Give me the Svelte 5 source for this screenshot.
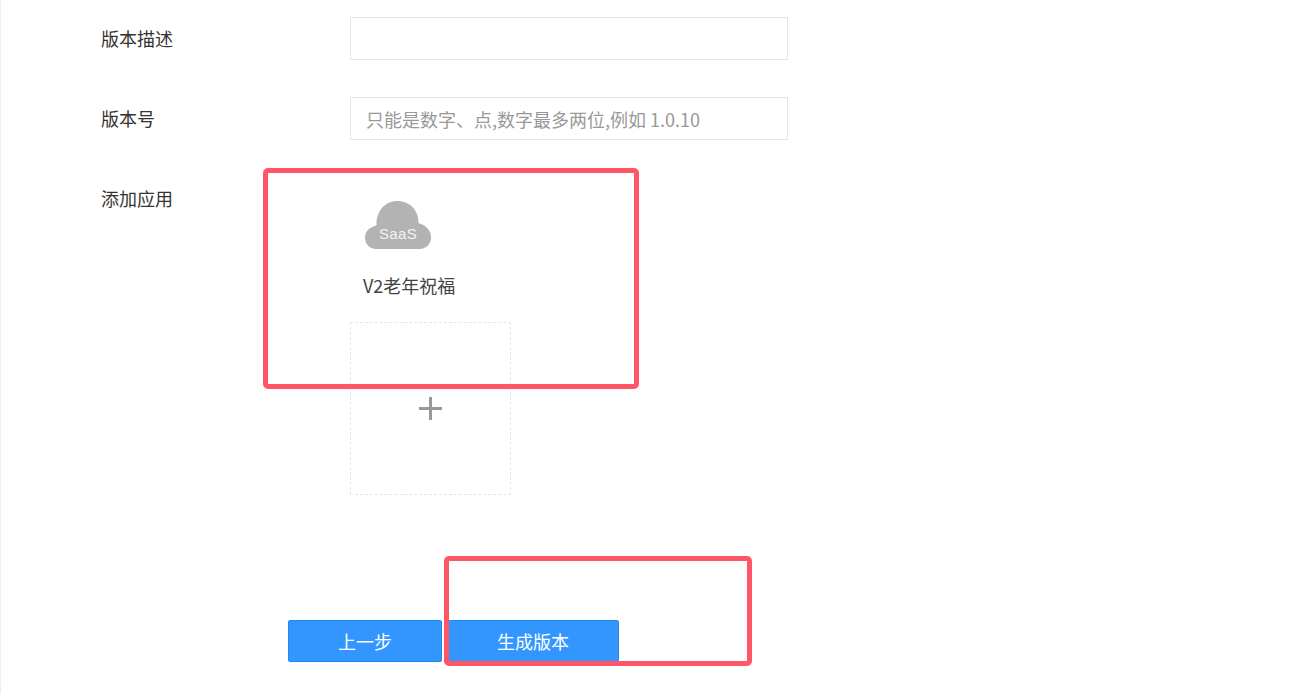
<script>
	const placeholder = '只能是数字、点,数字最多两位,例如 1.0.10';
</script>

<div class="page">
	<div class="row">
		<span class="label">版本描述</span>
		<input class="field" type="text" />
	</div>
	<div class="row">
		<span class="label">版本号</span>
		<input class="field" type="text" {placeholder} />
	</div>
	<div class="row apps">
		<span class="label">添加应用</span>
		<div class="app-list">
			<div class="app">
				<svg class="cloud" width="66" height="48" viewBox="0 0 66 48">
					<path
						d="M11 48C4.900 48 0 43 0 36.500C0 30.500 4 26.500 11.500 24.500C11 10 20 0 32.500 0C45 0 54 10 53.500 22C60.500 24 66 29 66 36.500C66 43 61 48 55 48Z"
						fill="#b3b3b3"
					/>
					<text x="33" y="37.500" text-anchor="middle">SaaS</text>
				</svg>
				<div class="app-name">V2老年祝福</div>
			</div>
			<div class="add-tile">
				<svg width="23" height="23" viewBox="0 0 23 23">
					<path d="M0 10h23v3H0zM10 0h3v23h-3z" fill="#999" />
				</svg>
			</div>
		</div>
	</div>
	<div class="actions">
		<button class="btn prev">上一步</button>
		<button class="btn next">生成版本</button>
	</div>

	<!-- red annotation frames drawn over the screenshot -->
	<div class="mark mark-app"></div>
	<div class="mark mark-btn"></div>
</div>

<style>
	:global(body) {
		background: #fff;
	}

	.page {
		position: relative;
		box-sizing: border-box;
		height: 694px;
		padding: 17px 0 0 100px;
		border-left: 1px solid #eee;
		margin-left: 0;
		overflow: hidden;
		font-family: 'Noto Sans CJK SC', 'Liberation Sans', sans-serif;
		font-size: 18px;
		color: #333;
	}

	.row {
		display: flex;
		margin-bottom: 37px;
	}

	.label {
		flex: 0 0 249px;
		height: 43px;
		line-height: 43px;
		color: #333;
	}

	.field {
		box-sizing: border-box;
		width: 438px;
		height: 43px;
		padding: 0 15px;
		border: 1px solid #e6e6e6;
		outline: none;
		font: inherit;
		font-size: 18px;
		color: #333;
		background: #fff;
	}

	.field::placeholder {
		color: #999;
		opacity: 1;
	}

	.apps {
		margin-bottom: 0;
	}

	.app-list {
		display: flex;
		flex-direction: column;
	}

	.app {
		height: 145px;
		box-sizing: border-box;
		padding: 24px 0 0 13px;
	}

	.cloud {
		display: block;
		margin-left: 2px;
	}

	.cloud text {
		font-family: 'Liberation Sans', sans-serif;
		font-size: 15px;
		letter-spacing: 0.3px;
		fill: #f2f2f2;
	}

	.app-name {
		margin-top: 22px;
		line-height: 28px;
		color: #444;
	}

	.add-tile {
		box-sizing: border-box;
		display: flex;
		align-items: center;
		justify-content: center;
		width: 161px;
		height: 173px;
		border: 1px dashed #e6e6e6;
	}

	.actions {
		display: flex;
		gap: 5px;
		margin: 125px 0 0 187px;
	}

	.btn {
		box-sizing: border-box;
		height: 42px;
		padding: 0;
		border: 1px solid #1c8cf5;
		border-radius: 2px;
		background: #3396ff;
		color: #fff;
		font: inherit;
		font-size: 18px;
	}

	.prev {
		width: 154px;
	}

	.next {
		width: 172px;
	}

	.mark {
		position: absolute;
		box-sizing: border-box;
		border: 5px solid #ff5566;
		border-radius: 5px;
	}

	.mark-app {
		left: 262px;
		top: 168px;
		width: 376px;
		height: 221px;
	}

	.mark-btn {
		left: 443px;
		top: 556px;
		width: 308px;
		height: 110px;
	}
</style>
